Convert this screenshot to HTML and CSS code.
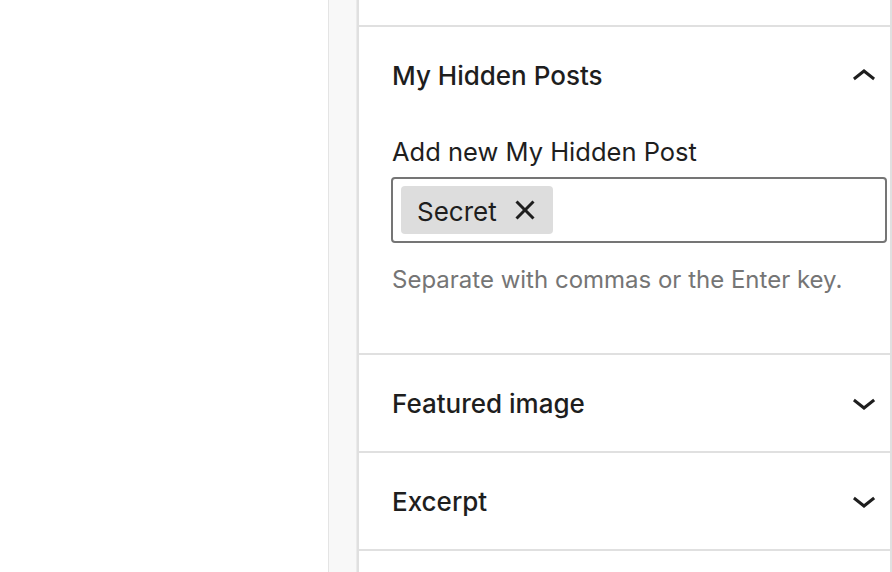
FILE: index.html
```html
<!DOCTYPE html>
<html lang="en">
<head>
<meta charset="utf-8">
<title>Document settings</title>
<link rel="stylesheet" href="styles.css">
</head>
<body>
<div class="layout">
  <div class="canvas"></div>
  <div class="gutter"></div>
  <aside class="sidebar">
    <div class="panel-top"></div>

    <section class="panel-section">
      <div class="panel-toggle">
        <span class="panel-title">My Hidden Posts</span>
        <svg class="panel-arrow" viewBox="0 0 24 24" width="48" height="48" aria-hidden="true"><path d="M6.5 12.4L12 8l5.5 4.4-.9 1.2L12 10l-4.6 3.6-.9-1.2z"/></svg>
      </div>
      <div class="panel-body">
        <label class="token-label">Add new My Hidden Post</label>
        <div class="token-input">
          <span class="token">
            <span class="token-text">Secret</span>
            <svg class="token-remove" viewBox="0 0 24 24" width="48" height="48" aria-hidden="true"><path d="M12 13.06l3.712 3.713 1.061-1.06L13.061 12l3.712-3.712-1.06-1.06L12 10.938 8.288 7.227l-1.061 1.06L10.939 12l-3.712 3.712 1.06 1.061L12 13.061z"/></svg>
          </span>
        </div>
        <p class="token-help">Separate with commas or the Enter key.</p>
      </div>
    </section>

    <section class="panel-section">
      <div class="panel-toggle">
        <span class="panel-title">Featured image</span>
        <svg class="panel-arrow down" viewBox="0 0 24 24" width="48" height="48" aria-hidden="true"><path d="M17.5 11.6L12 16l-5.5-4.4.9-1.2L12 14l4.6-3.6 1 1.2z"/></svg>
      </div>
    </section>

    <section class="panel-section">
      <div class="panel-toggle">
        <span class="panel-title">Excerpt</span>
        <svg class="panel-arrow down" viewBox="0 0 24 24" width="48" height="48" aria-hidden="true"><path d="M17.5 11.6L12 16l-5.5-4.4.9-1.2L12 14l4.6-3.6 1 1.2z"/></svg>
      </div>
    </section>

    <section class="panel-section last"></section>
  </aside>
</div>
</body>
</html>
```

FILE: styles.css
```css
html, body {
  margin: 0;
  padding: 0;
  background: #ffffff;
}

body {
  font-family: Inter, "Noto Sans", "Liberation Sans", sans-serif;
  color: #1e1e1e;
  -webkit-font-smoothing: antialiased;
}

.layout {
  display: flex;
  width: 892px;
  height: 572px;
  overflow: hidden;
}

.canvas {
  width: 328px;
  flex: none;
  background: #ffffff;
}

.gutter {
  width: 27px;
  flex: none;
  background: #f8f8f8;
  border-left: 1px solid #e4e4e4;
  border-right: 1px solid #ebebeb;
}

.sidebar {
  flex: 1;
  display: flex;
  flex-direction: column;
  border-left: 2px solid #e0e0e0;
  border-right: 2px solid #e0e0e0;
  background: #ffffff;
}

.panel-top {
  height: 25px;
  flex: none;
  border-bottom: 2px solid #e0e0e0;
}

.panel-section {
  flex: none;
  border-bottom: 2px solid #e0e0e0;
}

.panel-section.last {
  flex: 1;
  border-bottom: none;
}

.panel-toggle {
  display: flex;
  align-items: center;
  height: 96px;
  padding: 0 2px 0 33px;
}

.panel-title {
  flex: 1;
  font-size: 26px;
  font-weight: 500;
  line-height: 32px;
  color: #1e1e1e;
  margin-top: 2px;
}

.panel-arrow {
  flex: none;
  fill: #1e1e1e;
  margin-top: 4px;
}

.panel-arrow.down {
  margin-top: -2px;
}

.panel-body {
  padding: 14px 3px 57px 33px;
}

.token-label {
  display: block;
  font-size: 25.5px;
  line-height: 30px;
  margin-bottom: 10px;
  color: #1e1e1e;
}

.token-input {
  box-sizing: border-box;
  display: flex;
  align-items: center;
  height: 66px;
  padding: 7px 8px;
  border: 2px solid #757575;
  border-radius: 4px;
  margin-left: -1px;
}

.token {
  display: flex;
  align-items: center;
  height: 48px;
  padding: 0 4px 0 16px;
  background: #dddddd;
  border-radius: 4px;
}

.token-text {
  font-size: 26px;
  line-height: 48px;
  color: #1e1e1e;
  padding: 3px 4px 0 0;
}

.token-remove {
  fill: #1e1e1e;
}

.token-help {
  margin: 21px 0 0;
  font-size: 24px;
  line-height: 32px;
  color: #757575;
}
```
